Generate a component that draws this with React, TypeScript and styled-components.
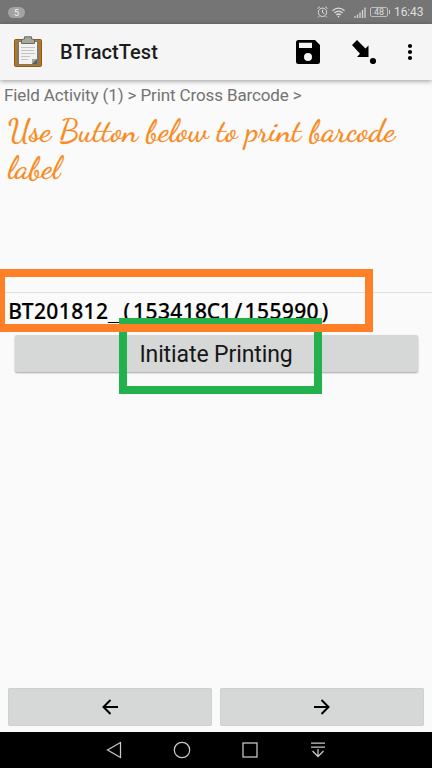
import React from "react";
import styled, { createGlobalStyle } from "styled-components";

const GlobalStyle = createGlobalStyle`
  * { box-sizing: border-box; }
  body { margin: 0; background: #fafafa; }
  svg { display: block; }
`;

const Screen = styled.div`
  position: relative;
  display: flex;
  flex-direction: column;
  width: 432px;
  height: 768px;
  overflow: hidden;
  background: #fafafa;
  font-family: Roboto, sans-serif;
`;

const StatusBar = styled.header`
  display: flex;
  align-items: center;
  flex: 0 0 24px;
  padding: 0 8px;
  background: #757575;
  color: #dedede;
`;

const CountPill = styled.span`
  width: 17px;
  height: 11px;
  border-radius: 6px;
  background: #a3a3a3;
  color: #f4f4f4;
  font-size: 9px;
  line-height: 12px;
  text-align: center;
`;

const StatusIcons = styled.div`
  display: flex;
  align-items: center;
  margin-left: auto;
`;

const Gap = styled.span<{ $w: number }>`
  width: ${(p) => p.$w}px;
`;

const Battery = styled.span`
  position: relative;
  width: 18px;
  height: 10px;
  margin: 0 6px 0 4px;
  border: 1px solid #bdbdbd;
  border-radius: 2px;
  font-size: 9px;
  line-height: 9px;
  text-align: center;

  &::after {
    content: "";
    position: absolute;
    top: 2px;
    right: -3px;
    width: 1px;
    height: 4px;
    background: #cfcfcf;
  }
`;

const Clock = styled.span`
  width: 30px;
  font-size: 12px;
  line-height: 24px;
  letter-spacing: -0.1px;
`;

const AppBar = styled.div`
  display: flex;
  align-items: center;
  flex: 0 0 56px;
  padding: 0 4px 0 12px;
  background: #f5f5f5;
  box-shadow: 0 1px 5px rgba(0, 0, 0, 0.4);
  z-index: 1;
`;

const AppTitle = styled.h1`
  flex: 1;
  margin: 0 0 0 16px;
  color: #1c1c1c;
  font-size: 20px;
  font-weight: 500;
  line-height: 28px;
  letter-spacing: 0.05px;
`;

const Actions = styled.div`
  display: flex;
  align-items: center;
`;

const IconButton = styled.button<{ $width: number }>`
  display: flex;
  justify-content: center;
  width: ${(p) => p.$width}px;
  padding: 0;
  border: 0;
  background: none;
`;

const Breadcrumb = styled.nav`
  height: 32px;
  padding: 4px 4px 0;
  color: #737373;
  font-size: 17px;
  line-height: 22px;
  letter-spacing: -0.12px;
  white-space: nowrap;
`;

const Prompt = styled.p`
  height: 180px;
  margin: 0;
  padding: 1px 8px 0;
  color: #f68b1f;
  font-family: "Dancing Script", cursive;
  font-size: 32px;
  line-height: 37px;
  white-space: nowrap;
  -webkit-text-stroke: 0.3px #f68b1f;
`;

const Answer = styled.div`
  display: flex;
  height: 39px;
  padding: 4px 9px 0;
  border-top: 1px solid #dfdfdf;
  color: #000;
  font-family: "Noto Sans", sans-serif;
  font-size: 21px;
  font-weight: 500;
  line-height: 29px;
  -webkit-text-stroke: 0.2px #000;
`;

const Cell = styled.span<{ $rule: boolean }>`
  display: flex;
  justify-content: center;
  width: 12.4px;
  font-family: ${(p) => (p.$rule ? '"DejaVu Sans Mono", monospace' : "inherit")};
`;

const PrintButton = styled.button`
  height: 37px;
  margin: 4px 14.5px 0;
  padding: 1px 0 0;
  border: 0;
  border-radius: 2px;
  background: #d6d7d7;
  box-shadow: 0 1px 2px rgba(0, 0, 0, 0.35);
  color: #161616;
  font-family: inherit;
  font-size: 23px;
  line-height: 38px;
  letter-spacing: -0.1px;
`;

const Pager = styled.div`
  display: flex;
  gap: 8px;
  margin-top: auto;
  padding: 0 8px 6px;
`;

const PageButton = styled.button`
  display: flex;
  flex: 1;
  align-items: center;
  justify-content: center;
  height: 38px;
  padding: 0;
  border: 0;
  border-radius: 2px;
  background: #d6d7d7;
  box-shadow: inset 0 0 0 1px #cfd0d0;
`;

const SystemNav = styled.footer`
  display: flex;
  align-items: center;
  justify-content: center;
  gap: 44px;
  flex: 0 0 36px;
  background: #000;
`;

const Highlight = styled.div<{ $x: number; $y: number; $w: number; $h: number; $color: string }>`
  position: absolute;
  left: ${(p) => p.$x}px;
  top: ${(p) => p.$y}px;
  width: ${(p) => p.$w}px;
  height: ${(p) => p.$h}px;
  border: 8px solid ${(p) => p.$color};
  pointer-events: none;
`;

const ClipboardIcon = () => (
  <svg width="32" height="32" viewBox="0 0 32 32">
    <rect x="2.5" y="3.5" width="27" height="27" rx="1" fill="#b8771c" stroke="#8f5a12" />
    <rect x="5" y="5" width="22" height="24" fill="#777a75" />
    <path d="M7 6h18v17l-5 5H7z" fill="#f2f2f2" />
    <path d="M20 23h5v5h-5z" fill="#5c5f5b" />
    <path d="M20 28v-5h5z" fill="#a5a8a3" />
    <path d="M9 11.5h14M9 14.5h13M9 17.5h14M9 20.5h9M9 23.5h7" stroke="#c4c4c4" />
    <path d="M9.5 7.5V4l2-1h1V.8h7V3h1l2 1v3.5z" fill="#a5a89f" stroke="#686b64" />
  </svg>
);

const AlarmIcon = () => (
  <svg width="11" height="12" viewBox="0 0 11 12" fill="none" stroke="#dedede">
    <circle cx="5.5" cy="6.3" r="4.2" />
    <path d="M.5 2.5 2.8.8M10.5 2.5 8.2.8M5.5 3.8v2.7l2 1.2M2.2 10.2l-1 1.2M8.8 10.2l1 1.2" />
  </svg>
);

const WifiIcon = () => (
  <svg width="13" height="11" viewBox="0 0 13 11" fill="none" stroke="#dedede" strokeWidth="1.2">
    <path d="M.5 3.8Q6.5-1.4 12.5 3.8M2.4 6Q6.5 2.4 10.6 6M4.3 8Q6.5 6 8.7 8" />
    <circle cx="6.5" cy="9.6" r=".8" fill="#dedede" stroke="none" />
  </svg>
);

const SignalIcon = () => (
  <svg width="12" height="11" viewBox="0 0 12 11" stroke="#d6d6d6" strokeWidth="1.3">
    <path d="M1 9v2M3.5 7.5V11M6 5.5V11M8.5 3V11M11 .5V11" />
  </svg>
);

const SaveIcon = () => (
  <svg width="24" height="24" viewBox="0 0 24 24">
    <path
      fillRule="evenodd"
      d="M2.5 0H19l5 5v16.5a2.5 2.5 0 0 1-2.5 2.5h-19A2.5 2.5 0 0 1 0 21.5v-19A2.5 2.5 0 0 1 2.5 0ZM3 2.7V8h13V2.7ZM12 13a4 4 0 1 0 0 8 4 4 0 0 0 0-8Z"
    />
  </svg>
);

const JumpIcon = () => (
  <svg width="24" height="24" viewBox="0 0 24 24">
    <path d="M0 5 5 0l8.5 8.5L16.5 5.5V17H5l3-3.2z" />
    <circle cx="21" cy="21" r="3.1" />
  </svg>
);

const MoreIcon = () => (
  <svg width="6" height="18" viewBox="0 0 6 18">
    <circle cx="3" cy="3" r="2.1" />
    <circle cx="3" cy="9" r="2.1" />
    <circle cx="3" cy="15" r="2.1" />
  </svg>
);

const ArrowIcon = ({ path }: { path: string }) => (
  <svg width="16" height="16" viewBox="0 0 16 16" fill="none" stroke="#000" strokeWidth="2">
    <path d={path} />
  </svg>
);

const NavIcon = ({ children }: { children: React.ReactNode }) => (
  <svg width="24" height="24" viewBox="0 0 24 24" fill="none" stroke="#c9c9c9" strokeWidth="1.25">
    {children}
  </svg>
);

const code = "BT201812_(153418C1/155990)";

export default function App() {
  return (
    <>
      <GlobalStyle />
      <Screen>
        <StatusBar>
          <CountPill>5</CountPill>
          <StatusIcons>
            <AlarmIcon />
            <Gap $w={4} />
            <WifiIcon />
            <Gap $w={9} />
            <SignalIcon />
            <Battery>48</Battery>
            <Clock>16:43</Clock>
          </StatusIcons>
        </StatusBar>
        <AppBar>
          <ClipboardIcon />
          <AppTitle>BTractTest</AppTitle>
          <Actions>
            <IconButton $width={56} aria-label="Save"><SaveIcon /></IconButton>
            <IconButton $width={56} aria-label="Go to prompt"><JumpIcon /></IconButton>
            <IconButton $width={36} aria-label="More options"><MoreIcon /></IconButton>
          </Actions>
        </AppBar>
        <Breadcrumb>Field Activity (1) &gt; Print Cross Barcode &gt;</Breadcrumb>
        <Prompt>
          Use Button below to print barcode
          <br />
          label
        </Prompt>
        <Answer>
          {code.split("").map((char, i) => (
            <Cell key={i} $rule={char === "_"}>{char}</Cell>
          ))}
        </Answer>
        <PrintButton>Initiate Printing</PrintButton>
        <Pager>
          <PageButton aria-label="Previous"><ArrowIcon path="M16 8H2M8.5 1 1.5 8l7 7" /></PageButton>
          <PageButton aria-label="Next"><ArrowIcon path="M0 8h14M7.5 1l7 7-7 7" /></PageButton>
        </Pager>
        <SystemNav>
          <NavIcon><path d="M18.5 4.5v15L5.5 12z" /></NavIcon>
          <NavIcon><circle cx="12" cy="12" r="7.7" /></NavIcon>
          <NavIcon><rect x="5" y="5" width="14" height="14" /></NavIcon>
          <NavIcon><path d="M5 5h14M5 9h14M12 11v7M6.5 13l5.5 5.5 5.5-5.5" /></NavIcon>
        </SystemNav>
        <Highlight $x={119} $y={318} $w={203} $h={76} $color="#22b14c" />
        <Highlight $x={-3} $y={269} $w={376} $h={63} $color="#ff7f27" />
      </Screen>
    </>
  );
}
